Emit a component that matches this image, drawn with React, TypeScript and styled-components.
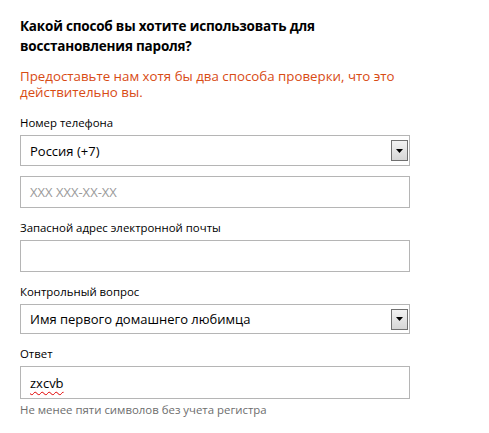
import styled, { createGlobalStyle } from 'styled-components';

const GlobalStyle = createGlobalStyle`
    html, body {
        margin: 0;
        padding: 0;
        background: #ffffff;
    }
    body {
        font-family: "Open Sans", "Noto Sans", "DejaVu Sans", sans-serif;
        color: #000000;
    }
`;

interface FieldProps {
    label: string;
    children: React.ReactNode;
}

function Field({ label, children }: FieldProps): JSX.Element {
    return (
        <Group>
            <Label>{label}</Label>
            {children}
        </Group>
    );
}

function SelectBox({ value, height }: { value: string; height: number }): JSX.Element {
    return (
        <Box $height={height}>
            <BoxText>{value}</BoxText>
            <ArrowButton>
                <svg width="7" height="4" viewBox="0 0 7 4">
                    <path d="M0 0 H7 L3.5 4 Z" fill="#000" />
                </svg>
            </ArrowButton>
        </Box>
    );
}

export default function App(): JSX.Element {
    return (
        <Page>
            <GlobalStyle />
            <Title>Какой способ вы хотите использовать для восстановления пароля?</Title>
            <Notice>Предоставьте нам хотя бы два способа проверки, что это действительно вы.</Notice>

            <Field label="Номер телефона">
                <SelectBox value="Россия (+7)" height={31} />
                <Box $height={32} $gapTop>
                    <BoxText $placeholder>XXX XXX-XX-XX</BoxText>
                </Box>
            </Field>

            <Field label="Запасной адрес электронной почты">
                <Box $height={32} />
            </Field>

            <Field label="Контрольный вопрос">
                <SelectBox value="Имя первого домашнего любимца" height={30} />
            </Field>

            <Field label="Ответ">
                <Box $height={33}>
                    <BoxText><Misspelled>zxcvb</Misspelled></BoxText>
                </Box>
                <Hint>Не менее пяти символов без учета регистра</Hint>
            </Field>
        </Page>
    );
}

const Page = styled.div`
    width: 390px;
    padding: 16px 0 0 20px;
`;

const Title = styled.h1`
    margin: 0;
    font-size: 13.5px;
    font-weight: 700;
    letter-spacing: -0.2px;
    line-height: 20px;
    color: #000000;
`;

const Notice = styled.p`
    margin: 12px 0 15px 0;
    font-size: 13.3px;
    line-height: 16px;
    color: #d84b14;
`;

const Group = styled.div`
    display: flex;
    flex-direction: column;
    margin-top: 12px;
`;

const Label = styled.div`
    font-size: 11.4px;
    line-height: 16px;
    color: #000000;
    margin-bottom: 4px;
`;

const Box = styled.div<{ $height: number; $gapTop?: boolean }>`
    box-sizing: border-box;
    display: flex;
    align-items: center;
    justify-content: space-between;
    width: 390px;
    height: ${props => props.$height}px;
    margin-top: ${props => props.$gapTop ? "10px" : "0"};
    padding: 0 0 0 9px;
    border: 1px solid #b5b5b5;
    background: #ffffff;
`;

const BoxText = styled.span<{ $placeholder?: boolean }>`
    font-size: 13px;
    color: ${props => props.$placeholder ? "#9a9a9a" : "#000000"};
`;

const Misspelled = styled.span`
    text-decoration: underline wavy #e00000;
    text-decoration-thickness: 1px;
    text-underline-offset: 3px;
`;

const ArrowButton = styled.div`
    box-sizing: border-box;
    display: flex;
    align-items: center;
    justify-content: center;
    width: 17px;
    height: 21px;
    margin-right: 1px;
    border: 1px solid #707070;
    background: linear-gradient(#f2f2f2, #d6d6d6);
`;

const Hint = styled.div`
    margin-top: 3px;
    font-size: 11.4px;
    line-height: 16px;
    color: #6d6d6d;
`;
